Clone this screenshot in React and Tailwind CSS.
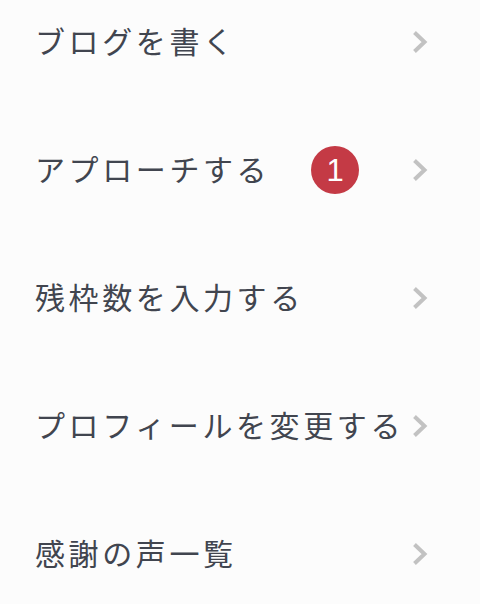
import React from "react";

const items = [
  { label: "ブログを書く" },
  { label: "アプローチする", badge: 1 },
  { label: "残枠数を入力する" },
  { label: "プロフィールを変更する" },
  { label: "感謝の声一覧" },
];

function Chevron() {
  return (
    <svg width="16" height="24" viewBox="0 0 16 24" className="shrink-0">
      <polyline
        points="2.5,2.5 12.5,12 2.5,21.5"
        fill="none"
        stroke="#c2c2c2"
        strokeWidth="4"
        strokeLinecap="butt"
        strokeLinejoin="miter"
      />
    </svg>
  );
}

export default function App() {
  return (
    <div className="w-[480px] h-[604px] overflow-hidden bg-[#fcfcfc]">
      <div className="-mt-[22px] flex flex-col">
        {items.map((it) => (
          <div
            key={it.label}
            className="h-[128px] flex items-center pl-[35px] pr-[52px]"
          >
            <span
              className="flex-1 text-[30px] leading-none tracking-[0.12em] text-[#41454f] whitespace-nowrap -translate-y-[2px]"
              style={{ fontFamily: '"Noto Sans CJK JP", "Noto Sans", sans-serif' }}
            >
              {it.label}
            </span>
            {it.badge ? (
              <span className="mr-[53px] w-[48px] h-[48px] rounded-full bg-[#c43a45] text-white flex items-center justify-center font-['Liberation_Sans',Arial,sans-serif] text-[31px] leading-none">
                {it.badge}
              </span>
            ) : null}
            <Chevron />
          </div>
        ))}
      </div>
    </div>
  );
}
